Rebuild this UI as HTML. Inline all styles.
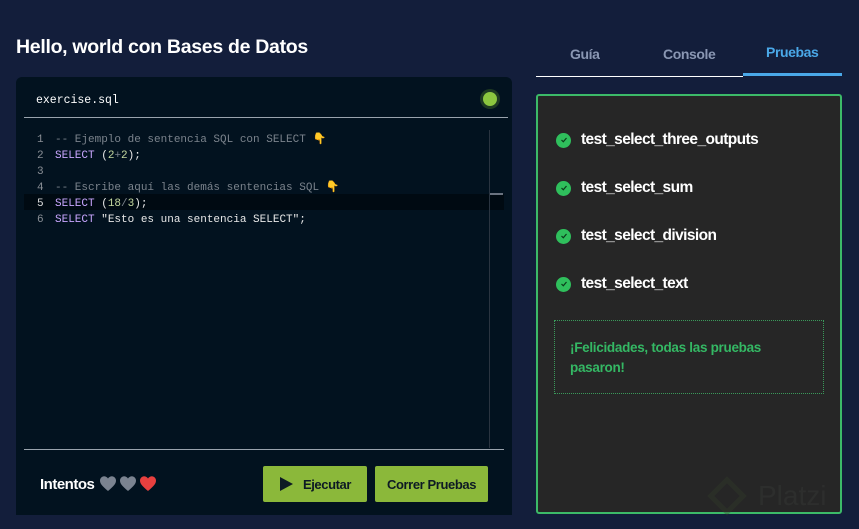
<!DOCTYPE html>
<html><head><meta charset="utf-8"><style>
*{margin:0;padding:0;box-sizing:border-box}
body{width:859px;height:529px;background:#131e3b;font-family:"Liberation Sans",sans-serif;position:relative;overflow:hidden}
.abs{position:absolute}
h1{position:absolute;left:16px;top:36px;font-size:19.5px;font-weight:bold;color:#fff;letter-spacing:-0.3px}
.ed{left:16px;top:77px;width:496px;height:438px;background:#02121f;border-radius:6px 6px 0 0}
.mono{font-family:"Liberation Mono",monospace;font-size:11px}
.code div{height:16px;line-height:16px;white-space:pre;color:#d8d8d8}
.n{display:inline-block;width:18px;color:#8a8f96}
.c{color:#7b838c}.k{color:#c9a6ff}.p{color:#e8e8e8}.num{color:#c5d9a0}.s{color:#e8e8e8}
.btn{background:#8bb83a;border-radius:2px;color:#0d1a24;font-weight:bold;font-size:13px;letter-spacing:-0.4px;display:flex;align-items:center;justify-content:center}
.tab{font-weight:bold;font-size:14px;color:#8a97b3;letter-spacing:-0.4px}
.t{left:556px;height:16px;display:flex;align-items:center;color:#fff;font-weight:bold;font-size:15.5px;letter-spacing:-0.6px}
.ck{width:15px;height:15px;border-radius:50%;background:#2fbf5c;margin-right:10px;display:flex;align-items:center;justify-content:center}
</style></head><body>
<h1>Hello, world con Bases de Datos</h1>
<div class="abs ed"></div>
<div class="abs mono" style="left:36px;top:94px;color:#fff;font-size:11.5px">exercise.sql</div>
<div class="abs" style="left:480px;top:89px;width:20px;height:20px;border-radius:50%;background:#1e3a22"></div>
<div class="abs" style="left:483px;top:92px;width:14px;height:14px;border-radius:50%;background:#8bc63f"></div>
<div class="abs" style="left:24px;top:117px;width:484px;height:1px;background:#9aa3ad"></div>
<div class="abs" style="left:24px;top:194px;width:480px;height:16px;background:#000a12"></div>
<div class="abs" style="left:489px;top:130px;width:1px;height:318px;background:#2a3440"></div>
<div class="abs" style="left:490px;top:193px;width:13px;height:2px;background:#6a7380"></div>
<div class="abs mono code" style="left:37px;top:132px">
<div><span class="n">1</span><span class="c">-- Ejemplo de sentencia SQL con SELECT </span><span style="color:#f0b03c">👇</span></div>
<div><span class="n">2</span><span class="k">SELECT</span> <span class="p">(</span><span class="num">2</span><span class="c">+</span><span class="num">2</span><span class="p">);</span></div>
<div><span class="n">3</span></div>
<div><span class="n">4</span><span class="c">-- Escribe aquí las demás sentencias SQL </span><span style="color:#f0b03c">👇</span></div>
<div><span class="n" style="color:#ddd">5</span><span class="k">SELECT</span> <span class="p">(</span><span class="num">18</span><span class="c">/</span><span class="num">3</span><span class="p">);</span></div>
<div><span class="n">6</span><span class="k">SELECT</span> <span class="s">"Esto es una sentencia SELECT";</span></div>
</div>
<div class="abs" style="left:24px;top:449px;width:480px;height:1px;background:#9aa3ad"></div>
<div class="abs" style="left:40px;top:475px;color:#fff;font-weight:bold;font-size:15px;letter-spacing:-0.5px;display:flex;align-items:center">Intentos
<svg width="60" height="18" viewBox="0 0 60 18" style="margin-left:5px"><g><path d="M9 16 C3 11 1 8.5 1 5.5 C1 3 3 1.2 5.2 1.2 C7 1.2 8.2 2.3 9 3.5 C9.8 2.3 11 1.2 12.8 1.2 C15 1.2 17 3 17 5.5 C17 8.5 15 11 9 16Z" fill="#7b8390"/><path transform="translate(20 0)" d="M9 16 C3 11 1 8.5 1 5.5 C1 3 3 1.2 5.2 1.2 C7 1.2 8.2 2.3 9 3.5 C9.8 2.3 11 1.2 12.8 1.2 C15 1.2 17 3 17 5.5 C17 8.5 15 11 9 16Z" fill="#7b8390"/><path transform="translate(40 0)" d="M9 16 C3 11 1 8.5 1 5.5 C1 3 3 1.2 5.2 1.2 C7 1.2 8.2 2.3 9 3.5 C9.8 2.3 11 1.2 12.8 1.2 C15 1.2 17 3 17 5.5 C17 8.5 15 11 9 16Z" fill="#e8403f"/></g></svg></div>
<div class="abs btn" style="left:263px;top:466px;width:104px;height:36px"><svg width="14" height="14" viewBox="0 0 14 14" style="margin-right:10px"><path d="M1 0 L14 7 L1 14Z" fill="#0d1a24"/></svg>Ejecutar</div>
<div class="abs btn" style="left:375px;top:466px;width:113px;height:36px">Correr Pruebas</div>

<div class="abs tab" style="left:570px;top:46px">Guía</div>
<div class="abs tab" style="left:663px;top:46px">Console</div>
<div class="abs tab" style="left:766px;top:44px;color:#4aa8e8">Pruebas</div>
<div class="abs" style="left:536px;top:76px;width:207px;height:1px;background:#fff"></div>
<div class="abs" style="left:743px;top:73px;width:99px;height:3px;background:#4aa8e8"></div>
<div class="abs" style="left:536px;top:94px;width:306px;height:420px;background:#262626;border:2px solid #3cba68;border-radius:3px"></div>
<div class="abs t" style="top:132px"><div class="ck"><svg width="8" height="8" viewBox="0 0 8 8"><path d="M1.5 4 L3.3 5.8 L6.5 2" stroke="#0b3a1a" stroke-width="1.2" fill="none"/></svg></div>test_select_three_outputs</div>
<div class="abs t" style="top:180px"><div class="ck"><svg width="8" height="8" viewBox="0 0 8 8"><path d="M1.5 4 L3.3 5.8 L6.5 2" stroke="#0b3a1a" stroke-width="1.2" fill="none"/></svg></div>test_select_sum</div>
<div class="abs t" style="top:228px"><div class="ck"><svg width="8" height="8" viewBox="0 0 8 8"><path d="M1.5 4 L3.3 5.8 L6.5 2" stroke="#0b3a1a" stroke-width="1.2" fill="none"/></svg></div>test_select_division</div>
<div class="abs t" style="top:276px"><div class="ck"><svg width="8" height="8" viewBox="0 0 8 8"><path d="M1.5 4 L3.3 5.8 L6.5 2" stroke="#0b3a1a" stroke-width="1.2" fill="none"/></svg></div>test_select_text</div>
<div class="abs" style="left:554px;top:320px;width:270px;height:74px;border:1px dotted #3a9a5a"></div>
<div class="abs" style="left:570px;top:338px;width:230px;color:#34b864;font-weight:bold;font-size:13.5px;line-height:20px;letter-spacing:-0.3px">¡Felicidades, todas las pruebas pasaron!</div>
<div class="abs" style="left:713px;top:482px;width:28px;height:28px;border:5px solid #34402a;transform:rotate(45deg);opacity:0.35"></div>
<div class="abs" style="left:758px;top:480px;font-size:28px;color:#3a3d3a;opacity:0.35">Platzi</div>
</body></html>
